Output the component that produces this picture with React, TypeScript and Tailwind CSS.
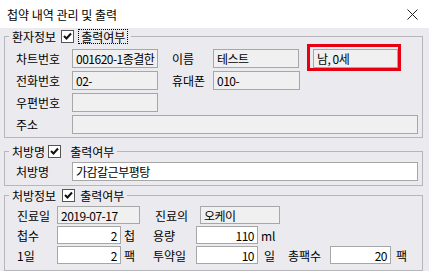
import type { ReactNode } from 'react';

function Check() {
  return (
    <span className="flex h-[13px] w-[13px] items-center justify-center border border-[#555] bg-white">
      <svg width="9" height="9" viewBox="0 0 9 9">
        <path d="M1 4 L3.5 6.5 L8 1.5" fill="none" stroke="#111" strokeWidth="2" />
      </svg>
    </span>
  );
}

function Legend({ title, boxGap, textGap, focus }: { title: string; boxGap: number; textGap: number; focus?: boolean }) {
  return (
    <legend className="ml-[4px] px-[3px]">
      <span className="flex h-[15px] items-center leading-[15px]">
        <span>{title}</span>
        <span style={{ marginLeft: boxGap }}>
          <Check />
        </span>
        <span
          style={{ marginLeft: textGap }}
          className={focus ? 'border border-dotted border-black px-[2px] leading-[13px]' : 'leading-[13px]'}
        >
          출력여부
        </span>
      </span>
    </legend>
  );
}

function Box({ w, h = 'h-[19px]', white, right, children }: { w: string; h?: string; white?: boolean; right?: boolean; children?: ReactNode }) {
  return (
    <div
      className={`${w} ${h} flex shrink-0 items-center overflow-hidden whitespace-nowrap border border-[#a7a7a7] px-[3px] leading-[15px] tracking-[-0.5px] ${
        white ? 'bg-white' : 'bg-[#f0f0f0]'
      } ${right ? 'justify-end' : ''}`}
    >
      {children}
    </div>
  );
}

function Label({ w, children }: { w: string; children: ReactNode }) {
  return <span className={`${w} shrink-0 whitespace-nowrap leading-[15px]`}>{children}</span>;
}

export default function App() {
  return (
    <div className="relative h-[271px] w-[429px] overflow-hidden bg-[#ebebef] font-['Noto_Sans_CJK_KR',sans-serif] text-[12px] text-black">
      <div className="flex h-[28px] items-center justify-between bg-white pl-[7px] pr-[11px]">
        <span className="leading-[15px]">첩약 내역 관리 및 출력</span>
        <svg width="11" height="11" viewBox="0 0 11 11">
          <path d="M0.5 0.5 L10.5 10.5 M10.5 0.5 L0.5 10.5" stroke="#222" strokeWidth="1" />
        </svg>
      </div>

      <div className="pl-[4px] pt-[1px]">
        <fieldset className="w-[419px] border border-[#b7b7bb] pb-[3px]">
          <Legend title="환자정보" boxGap={5} textGap={4} focus />
          <div className="mt-[5px] flex flex-col gap-[3px] pl-[11px]">
            <div className="flex h-[19px] items-center">
              <Label w="w-[56px]">차트번호</Label>
              <Box w="w-[86px]">001620-1종결한</Box>
              <Label w="w-[41px] ml-[14px]">이름</Label>
              <Box w="w-[86px]">테스트</Box>
              <div className="ml-[14px]">
                <Box w="w-[85px]">남, 0세</Box>
              </div>
            </div>
            <div className="flex h-[19px] items-center">
              <Label w="w-[56px]">전화번호</Label>
              <Box w="w-[86px]">02-</Box>
              <Label w="w-[41px] ml-[14px]">휴대폰</Label>
              <Box w="w-[87px]">010-</Box>
            </div>
            <div className="flex h-[19px] items-center">
              <Label w="w-[56px]">우편번호</Label>
              <Box w="w-[86px]" />
            </div>
            <div className="flex h-[19px] items-center">
              <Label w="w-[56px]">주소</Label>
              <Box w="w-[346px]" />
            </div>
          </div>
        </fieldset>

        <fieldset className="mt-[6px] w-[419px] border border-[#b7b7bb] pb-[4px]">
          <Legend title="처방명" boxGap={3} textGap={9} />
          <div className="mt-[3px] flex h-[19px] items-center pl-[11px]">
            <Label w="w-[56px]">처방명</Label>
            <Box w="w-[346px]" white>
              가감갈근부평탕
            </Box>
          </div>
        </fieldset>

        <fieldset className="mt-[2px] w-[419px] border border-[#b7b7bb] pb-[6px]">
          <Legend title="처방정보" boxGap={6} textGap={5} />
          <div className="mt-[3px] flex flex-col gap-[2px] pl-[12px]">
            <div className="flex h-[18px] items-center">
              <Label w="w-[40px]">진료일</Label>
              <Box w="w-[83px]" h="h-[18px]">2019-07-17</Box>
              <Label w="w-[45px] ml-[15px]">진료의</Label>
              <Box w="w-[80px]" h="h-[18px]">오케이</Box>
            </div>
            <div className="flex h-[18px] items-center">
              <Label w="w-[40px]">첩수</Label>
              <Box w="w-[64px]" h="h-[18px]" white right>
                2
              </Box>
              <Label w="w-[14px] ml-[3px]">첩</Label>
              <Label w="w-[43px] ml-[15px]">용량</Label>
              <Box w="w-[62px]" h="h-[18px]" white right>
                110
              </Box>
              <Label w="w-[20px] ml-[3px]">ml</Label>
            </div>
            <div className="flex h-[18px] items-center">
              <Label w="w-[40px]">1일</Label>
              <Box w="w-[64px]" h="h-[18px]" white right>
                2
              </Box>
              <Label w="w-[14px] ml-[3px]">팩</Label>
              <Label w="w-[43px] ml-[15px]">투약일</Label>
              <Box w="w-[62px]" h="h-[18px]" white right>
                10
              </Box>
              <Label w="w-[14px] ml-[6px]">일</Label>
              <Label w="w-[42px] ml-[10px]">총팩수</Label>
              <Box w="w-[61px]" h="h-[18px]" white right>
                20
              </Box>
              <Label w="w-[14px] ml-[5px]">팩</Label>
            </div>
          </div>
        </fieldset>
      </div>

      <div className="absolute left-[307px] top-[44px] h-[27px] w-[94px] border-[3px] border-[#e60012]" />
    </div>
  );
}
